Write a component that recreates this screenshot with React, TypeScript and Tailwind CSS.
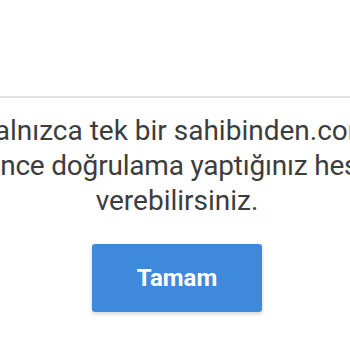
import React from "react";

export default function App() {
  return (
    <div
      className="w-[350px] h-[350px] bg-white overflow-hidden flex flex-col"
      style={{ fontFamily: "Roboto, 'Noto Sans', sans-serif" }}
    >
      <div className="h-[96px] shrink-0" />
      <div className="h-[2px] shrink-0 bg-[#e3e3e3]" />
      <div className="flex flex-col items-center pl-[4px] pt-[15px] text-[28px] leading-[35px] text-[#3d3d3d]">
        <p className="whitespace-nowrap">yalnızca tek bir sahibinden.com</p>
        <p className="whitespace-nowrap pl-[26px] tracking-[-0.2px]">önce doğrulama yaptığınız hesabı</p>
        <p className="whitespace-nowrap">verebilirsiniz.</p>
      </div>
      <div className="flex justify-center pl-[4px] pt-[26px]">
        <button className="w-[170px] h-[68px] rounded-[3px] bg-[#3f89dc] text-white text-[24px] font-bold shadow-[0_2px_4px_rgba(0,0,0,0.18)]">
          Tamam
        </button>
      </div>
    </div>
  );
}
